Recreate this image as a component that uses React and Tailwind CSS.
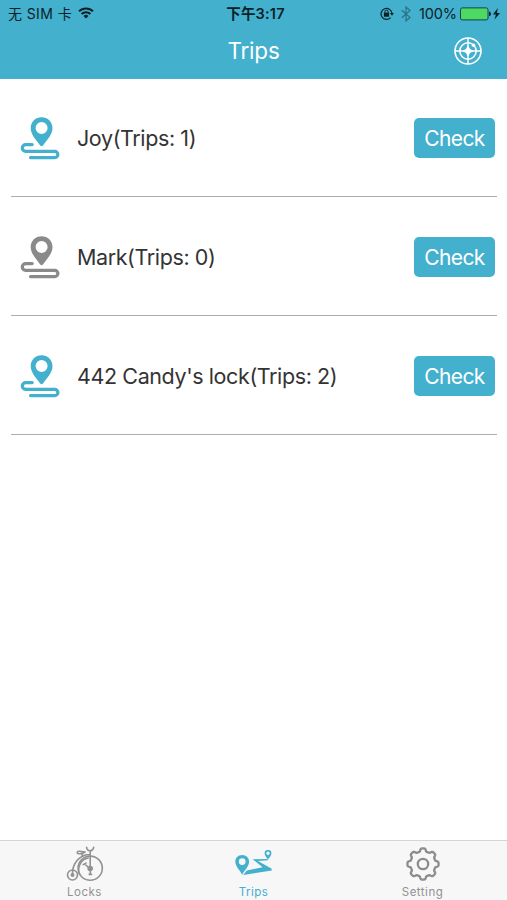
const TRIPS = [
  { label: "Joy(Trips: 1)", active: true },
  { label: "Mark(Trips: 0)", active: false },
  { label: "442 Candy's lock(Trips: 2)", active: true },
];

function RouteIcon({ active }) {
  return (
    <svg viewBox="0 0 40 44" className={`mt-[2px] h-[44px] w-[40px] shrink-0 ${active ? "text-[#43b0cd]" : "text-[#8a8a8a]"}`}>
      <path
        fill="currentColor"
        fillRule="evenodd"
        d="M21.6 0.2C15.4 0.2 10.7 4.9 10.7 10.9C10.7 17.7 16.3 22.7 20 28.3Q21.6 30.2 23.2 28.3C26.9 22.7 32.5 17.7 32.5 10.9C32.5 4.9 27.8 0.2 21.6 0.2ZM21.6 5A6 6 0 1 1 21.6 17A6 6 0 0 1 21.6 5Z"
      />
      <path
        d="M12.2 27.6H5.7a3.4 3.4 0 0 0 0 6.8H34.8a3.1 3.1 0 0 1 0 6.2H10.5"
        fill="none"
        stroke="currentColor"
        strokeWidth="3.2"
        strokeLinecap="round"
      />
    </svg>
  );
}

function TargetIcon() {
  return (
    <svg viewBox="0 0 28 28" className="size-[28px]" fill="none" stroke="white">
      <circle cx="14" cy="14" r="13" strokeWidth="1.6" />
      <circle cx="14" cy="14" r="8.2" strokeWidth="1.6" />
      <path d="M14 1v26M1 14h26" strokeWidth="1.4" />
      <path d="M14 9l1.7 3.3L19 14l-3.3 1.7L14 19l-1.7-3.3L9 14l3.3-1.7Z" fill="white" strokeWidth="0.8" />
      <circle cx="19.5" cy="8.2" r="1.8" fill="white" stroke="none" />
    </svg>
  );
}

function WifiIcon() {
  return (
    <svg viewBox="0 0 16 12" className="mb-px h-[12px] w-[16px]" fill="none" stroke="#0b2229" strokeWidth="2">
      <path d="M1 4.3a10 10 0 0 1 14 0" />
      <path d="M3.6 7a6.2 6.2 0 0 1 8.8 0" />
      <path d="M8 11.6L5.5 9a3.6 3.6 0 0 1 5 0Z" fill="#0b2229" stroke="none" />
    </svg>
  );
}

function LockRotationIcon() {
  return (
    <svg viewBox="0 0 14 13" className="h-[13px] w-[14px]" fill="none" stroke="#0b2229">
      <path d="M10.6 10.6A5.5 5.5 0 1 1 12 6.2" strokeWidth="1.2" />
      <path d="M9.9 6h4L12 8.7Z" fill="#0b2229" stroke="none" />
      <rect x="3.9" y="5.7" width="5.2" height="4" fill="#0b2229" stroke="none" />
      <path d="M4.9 6V4.8a1.6 1.6 0 0 1 3.2 0V6" strokeWidth="1" />
    </svg>
  );
}

function BluetoothIcon() {
  return (
    <svg viewBox="0 0 10 16" className="h-[16px] w-[10px]" fill="none" stroke="#2b7184" strokeWidth="1.2">
      <path d="M.8 4.2l8.2 7.2L5 15V1l4 3.6L.8 11.8" />
    </svg>
  );
}

function BatteryIcon() {
  return (
    <svg viewBox="0 0 42 14" className="h-[14px] w-[42px]">
      <rect x="0.5" y="0.9" width="27.5" height="12" rx="1.8" fill="#4cd964" stroke="#16414d" />
      <path d="M29 4.6q2 .5 2 2.3t-2 2.3Z" fill="#0b2229" />
      <path d="M37.8 0.9L32.9 7.6h3L34.6 12.6l5.4-6.7h-3.1Z" fill="#0b2229" />
    </svg>
  );
}

function BikeIcon() {
  return (
    <svg viewBox="0 0 38 36" className="h-[36px] w-[38px]" fill="none" stroke="#929292" strokeWidth="1.6" strokeLinecap="round" strokeLinejoin="round">
      <circle cx="24.2" cy="22.2" r="12.1" />
      <circle cx="6.5" cy="29" r="5" />
      <circle cx="6.5" cy="29" r="1.2" fill="#929292" />
      <path d="M6.5 27.6C6.4 18.2 12.2 11 20.2 8.8H24" />
      <path d="M24.2 21.3V4.8M20.6 1.3C20.8 3.5 22.2 4.8 24.2 4.8S27.3 3.3 27.7 1.3" />
      <path d="M15.8 5.6C13 4.9 11.2 5.2 11.2 6.4c0 1.6 2.3 1.5 4.6 1.1 1.2-.2 2-.9 3.3-1.4l-3.3-.5M15.4 7.8l1.5 2.2" />
      <path d="M13.8 28.4C10.5 21.5 15 13.2 22.2 12" />
      <circle cx="24.2" cy="22.5" r="2" fill="#929292" />
      <path d="M23.5 22.3l-4.8-4.3M17.2 18.6l2.8-1.5M24.3 24v4M23.2 28.4h2.4" />
    </svg>
  );
}

function TripTabIcon() {
  return (
    <svg viewBox="0 0 38 28" className="h-[28px] w-[38px]" fill="#43b0cd">
      <path fillRule="evenodd" d="M7.2 5C3.3 5 .3 7.9.3 11.5c0 4.7 4.4 8.6 6.9 13.2 2.5-4.6 6.9-8.5 6.9-13.2C14.1 7.9 11.1 5 7.2 5Zm0 3.2a3.4 3.4 0 1 1 0 6.8 3.4 3.4 0 0 1 0-6.8Z" />
      <path fillRule="evenodd" d="M33 0a3.3 3.3 0 0 0-3.4 3.4c0 2.1 1.9 3.5 3.4 6.2 1.5-2.7 3.4-4.1 3.4-6.2A3.3 3.3 0 0 0 33 0Zm0 1.6a1.7 1.7 0 1 1 0 3.4 1.7 1.7 0 0 1 0-3.4Z" />
      <path d="M32.5 8.9L17.6 9.2l10 8L11.8 20.4 8.2 25l28.5-4.4v-1.8L23 10.9l10-.7Z" />
    </svg>
  );
}

// Eight rounded teeth, traced as a smooth radial wave around the centre.
const GEAR_POINTS = Array.from({ length: 160 }, (_, i) => {
  const angle = (i / 160) * Math.PI * 2;
  const radius = 14.1 + 1.5 * Math.tanh(2.4 * Math.cos(8 * angle));
  return `${(17 + radius * Math.sin(angle)).toFixed(2)},${(17 - radius * Math.cos(angle)).toFixed(2)}`;
}).join(" ");

function GearIcon() {
  return (
    <svg viewBox="0 0 34 34" className="size-[34px]" fill="none" stroke="#8c8c8c" strokeWidth="2.3" strokeLinejoin="round">
      <polygon points={GEAR_POINTS} />
      <circle cx="17" cy="17" r="5.2" />
    </svg>
  );
}

function TabItem({ label, icon, active }) {
  return (
    <button className="flex flex-1 flex-col items-center pt-[4px]">
      <span className="flex h-[37px] items-center">{icon}</span>
      <span className={`mt-[3px] text-[11.5px] leading-[14px] tracking-[0.5px] ${active ? "text-[#43b0cd]" : "text-[#929292]"}`}>{label}</span>
    </button>
  );
}

export default function App() {
  return (
    <div className="flex h-[900px] w-[507px] flex-col overflow-hidden bg-white font-['Inter','Noto_Sans_CJK_SC',sans-serif]">
      <header className="flex h-[79px] shrink-0 flex-col bg-[#43b0cd]">
        <div className="grid h-[27px] grid-cols-[1fr_auto_1fr] items-center pl-[8px] pr-[5px] text-[14px] leading-none text-[#0b2229]">
          <div className="flex items-center gap-[6px]">
            <span className="whitespace-nowrap text-[14px] tracking-[0.4px]">无 SIM 卡</span>
            <WifiIcon />
          </div>
          <span className="pl-px pt-[2px] text-[14.5px] font-semibold tracking-[0.2px]">下午3:17</span>
          <div className="flex items-center justify-end">
            <LockRotationIcon />
            <span className="ml-[7px] flex"><BluetoothIcon /></span>
            <span className="ml-[8px] mr-[3px] pt-[2px] text-[14.5px] tracking-[-0.1px]">100%</span>
            <BatteryIcon />
          </div>
        </div>
        <div className="grid h-[48px] grid-cols-[1fr_auto_1fr] items-center pr-[25px]">
          <span />
          <h1 className="pl-[25px] text-[22.5px] leading-none tracking-[-0.2px] text-white">Trips</h1>
          <span className="flex justify-end"><TargetIcon /></span>
        </div>
      </header>
      <main className="min-h-0 flex-1">
        {TRIPS.map((trip) => (
          <div key={trip.label} className="ml-[11px] mr-[10px] flex h-[119px] items-center border-b border-[#acacac] pl-[9px] pr-[2px] pt-[2px] first:h-[118px] first:pt-px">
            <RouteIcon active={trip.active} />
            <span className="ml-[17px] flex-1 whitespace-nowrap pt-[2px] text-[21.5px] leading-none tracking-[-0.4px] text-[#333]">{trip.label}</span>
            <button className="h-[40px] w-[81px] rounded-[5px] bg-[#43b0cd] pt-px text-[21px] leading-none tracking-[-0.6px] text-white">Check</button>
          </div>
        ))}
      </main>
      <nav className="flex h-[60px] shrink-0 border-t border-[#d5d5d5] bg-[#f7f7f7]">
        <TabItem label="Locks" icon={<BikeIcon />} />
        <TabItem label="Trips" active icon={<TripTabIcon />} />
        <TabItem label="Setting" icon={<GearIcon />} />
      </nav>
    </div>
  );
}
